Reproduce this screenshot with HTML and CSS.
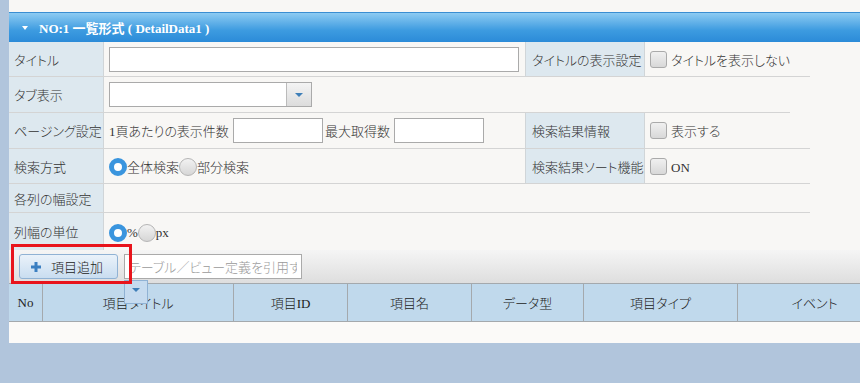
FILE: index.html
```html
<!DOCTYPE html>
<html lang="ja">
<head>
  <meta charset="UTF-8" />
  <title>DetailData1</title>
  <link rel="stylesheet" href="styles.css">
</head>
<body>
  <div class="panel">
    <div class="panel-head">
      <span class="caret"></span>
      <span class="head-title">NO:1 一覧形式 ( DetailData1 )</span>
    </div>

    <div class="form">
      <div class="row row-1">
        <div class="label">タイトル</div>
        <div class="cell cell-main"><input type="text" class="inp inp-title" /></div>
        <div class="label label-2">タイトルの表示設定</div>
        <div class="cell cell-side"><span class="check"></span>タイトルを表示しない</div>
      </div>
      <div class="row row-2">
        <div class="label">タブ表示</div>
        <div class="cell cell-wide">
          <div class="select"><span class="select-btn"><span class="tri"></span></span></div>
        </div>
      </div>
      <div class="row row-3">
        <div class="label">ページング設定</div>
        <div class="cell cell-main">1頁あたりの表示件数<input type="text" class="inp inp-num" />最大取得数<input type="text" class="inp inp-num" /></div>
        <div class="label label-2">検索結果情報</div>
        <div class="cell cell-side"><span class="check"></span>表示する</div>
      </div>
      <div class="row row-4">
        <div class="label">検索方式</div>
        <div class="cell cell-main"><span class="radio on"></span>全体検索<span class="radio"></span>部分検索</div>
        <div class="label label-2">検索結果ソート機能</div>
        <div class="cell cell-side"><span class="check"></span><span class="latin">ON</span></div>
      </div>
      <div class="row row-5">
        <div class="label">各列の幅設定</div>
        <div class="cell cell-full"></div>
      </div>
      <div class="row row-6">
        <div class="label">列幅の単位</div>
        <div class="cell cell-full"><span class="radio on"></span><span class="latin">%</span><span class="radio"></span><span class="latin">px</span></div>
      </div>
    </div>

    <div class="toolbar">
      <button class="add-btn">
        <svg class="plus" width="10" height="10" viewBox="0 0 10 10"><path d="M3.5 0h3v3.5H10v3H6.5V10h-3V6.5H0v-3h3.5z" fill="#3b7fc1"/></svg>
        項目追加
      </button>
      <input type="text" class="inp inp-ref" placeholder="テーブル／ビュー定義を引用する" />
      <span class="ref-drop"><span class="tri"></span></span>
      <span class="highlight"></span>
    </div>

    <div class="grid-head">
      <div class="col col-no">No</div>
      <div class="col col-title">項目タイトル</div>
      <div class="col col-id">項目ID</div>
      <div class="col col-name">項目名</div>
      <div class="col col-type">データ型</div>
      <div class="col col-kind">項目タイプ</div>
      <div class="col col-event">イベント</div>
    </div>
    <div class="grid-body"></div>
  </div>
</body>
</html>
```

FILE: styles.css
```css
body {
  margin: 0;
  background: #b1c5dc;
  font-family: 'Liberation Serif', 'Noto Sans CJK JP', serif;
  font-size: 13px;
  font-weight: 300;
  font-feature-settings: "palt";
  color: #333;
}

.panel {
  margin-left: 9px;
  width: 851px;
  height: 343px;
  padding-top: 12px;
  box-sizing: border-box;
  background: #f8f7f5;
  overflow: hidden;
  position: relative;
}

.panel-head {
  height: 30px;
  display: flex;
  align-items: center;
  background: linear-gradient(#8dcbf2, #3d9be0 60%, #2b8bd8);
  border-top: 1px solid #3a8ed2;
  box-sizing: border-box;
  color: #fff;
  font-weight: bold;
  font-size: 13px;
}

.caret {
  width: 0;
  height: 0;
  margin: 0 11px 0 13px;
  border-left: 3px solid transparent;
  border-right: 3px solid transparent;
  border-top: 4px solid #fff;
}

.row {
  display: flex;
}

.row-1 { height: 35px; }
.row-2 { height: 36px; }
.row-3 { height: 36px; }
.row-4 { height: 35px; }
.row-5 { height: 29px; }
.row-6 { height: 37px; }

.label, .cell {
  display: flex;
  align-items: center;
  border-bottom: 1px solid #d4d4d4;
  box-sizing: border-box;
}

.label {
  width: 95px;
  padding-left: 5px;
  background: #dde8ef;
  border-right: 1px solid #d0d5d8;
  white-space: nowrap;
}

.label-2 {
  width: 120px;
  padding-left: 6px;
  border-left: 1px solid #d0d5d8;
}

.cell {
  padding-left: 5px;
  white-space: nowrap;
}

.cell-main { width: 421px; }
.cell-side { width: 165px; }
.cell-wide { width: 686px; }
.cell-full { width: 706px; }
.row-6 .label, .row-6 .cell { border-bottom: none; }

.inp {
  height: 25px;
  box-sizing: border-box;
  border: 1px solid #aaa;
  background: #fff;
  padding: 0 4px;
  font-family: 'Noto Sans CJK JP', sans-serif;
  font-size: 13px;
  font-weight: 300;
  font-feature-settings: "palt";
  margin: 0;
}

.inp-title { width: 410px; }

.inp-num {
  width: 90px;
  margin: 0 2px 0 4px;
}

.select {
  width: 203px;
  height: 25px;
  box-sizing: border-box;
  border: 1px solid #aaa;
  background: #fff;
  display: flex;
  justify-content: flex-end;
}

.select-btn {
  width: 25px;
  height: 23px;
  box-sizing: border-box;
  border-left: 1px solid #bbb;
  background: linear-gradient(#f4f4f4, #dcdcdc);
  display: flex;
  align-items: center;
  justify-content: center;
}

.tri {
  width: 0;
  height: 0;
  border-left: 4px solid transparent;
  border-right: 4px solid transparent;
  border-top: 4px solid #3f7fb8;
}

.check {
  width: 17px;
  height: 17px;
  box-sizing: border-box;
  border: 1px solid #aaa;
  border-radius: 3px;
  background: linear-gradient(#f0f0f0, #d8d8d8);
  margin-right: 4px;
}

.radio {
  width: 18px;
  height: 18px;
  box-sizing: border-box;
  border-radius: 50%;
  border: 1px solid #b5b5b5;
  background: linear-gradient(#f2f2f2, #d6d6d6);
  margin-top: 2px;
}

.radio.on {
  border: 5px solid #3a95de;
  background: #fff;
}

.latin {
  font-family: 'Liberation Serif', serif;
  font-size: 13px;
  font-weight: normal;
  margin-top: 3px;
}

.toolbar {
  height: 33px;
  display: flex;
  align-items: center;
  padding-left: 10px;
  background: linear-gradient(#f5f5f5, #dedede);
  position: relative;
}

.add-btn {
  width: 99px;
  height: 25px;
  box-sizing: border-box;
  border: 1px solid #90b2d4;
  border-radius: 3px;
  background: linear-gradient(#eaf2fa, #c9ddf0);
  font-family: 'Noto Sans CJK JP', sans-serif;
  font-size: 13px;
  font-weight: 300;
  color: #222;
  display: flex;
  align-items: center;
  padding: 0 0 0 11px;
  margin-right: 6px;
}

.plus {
  margin-right: 10px;
}

.inp-ref {
  width: 178px;
  overflow: hidden;
}

.inp-ref::placeholder {
  color: #9a9a9a;
}

.ref-drop {
  position: absolute;
  left: 115px;
  top: 30px;
  width: 24px;
  height: 24px;
  box-sizing: border-box;
  border: 1px solid #90b2d4;
  background: #c6dbef;
  display: flex;
  justify-content: center;
  padding-top: 7px;
  z-index: 3;
}

.highlight {
  position: absolute;
  left: 2px;
  top: -6px;
  width: 121px;
  height: 40px;
  box-sizing: border-box;
  border: 3px solid #e8141c;
  z-index: 4;
}

.grid-head {
  display: flex;
  height: 39px;
  background: #c0d9ec;
  border-top: 1px solid #a4a9ad;
  border-bottom: 1px solid #a4a9ad;
  box-sizing: border-box;
  width: 882px;
}

.col {
  display: flex;
  align-items: center;
  justify-content: center;
  border-left: 1px solid #a4a9ad;
  box-sizing: border-box;
  font-family: 'Noto Sans CJK JP', sans-serif;
  font-size: 13px;
  color: #222;
}

.col-no, .col-id {
  font-family: 'Liberation Serif', 'Noto Sans CJK JP', serif;
}

.col-no { width: 33px; border-left: none; }
.col-title { width: 191px; }
.col-id { width: 114px; }
.col-name { width: 124px; }
.col-type { width: 112px; }
.col-kind { width: 154px; }
.col-event { width: 154px; }

.grid-body {
  height: 21px;
  background: #fbfaf8;
}
```
